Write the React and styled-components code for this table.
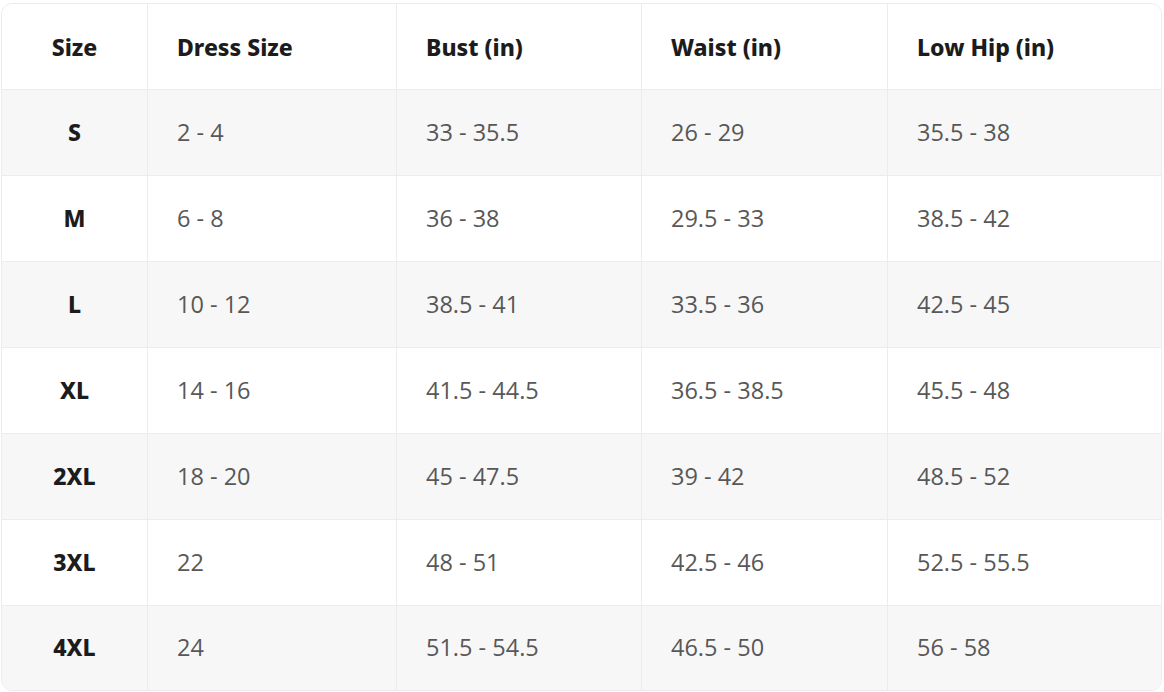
import React from "react";
import styled, { createGlobalStyle } from "styled-components";

const GlobalStyle = createGlobalStyle`
*{
    box-sizing: border-box;
}
body{
    margin: 0;
    background: #ffffff;
    font-family: "Open Sans", "Liberation Sans", sans-serif;
}
`

const rows = [
    ["S", "2 - 4", "33 - 35.5", "26 - 29", "35.5 - 38"],
    ["M", "6 - 8", "36 - 38", "29.5 - 33", "38.5 - 42"],
    ["L", "10 - 12", "38.5 - 41", "33.5 - 36", "42.5 - 45"],
    ["XL", "14 - 16", "41.5 - 44.5", "36.5 - 38.5", "45.5 - 48"],
    ["2XL", "18 - 20", "45 - 47.5", "39 - 42", "48.5 - 52"],
    ["3XL", "22", "48 - 51", "42.5 - 46", "52.5 - 55.5"],
    ["4XL", "24", "51.5 - 54.5", "46.5 - 50", "56 - 58"],
];

const headers = ["Size", "Dress Size", "Bust (in)", "Waist (in)", "Low Hip (in)"];

const App = () => {
    return (
        <>
            <GlobalStyle />
            <Page>
                <Card>
                    <Row>
                        {headers.map((h, i) => (
                            <HeadCell key={h} $center={i === 0}>{h}</HeadCell>
                        ))}
                    </Row>
                    {rows.map((row, r) => (
                        <Row key={row[0]} $striped={r % 2 === 0}>
                            {row.map((cell, i) =>
                                i === 0 ? (
                                    <SizeCell key={i}>{cell}</SizeCell>
                                ) : (
                                    <Cell key={i}>{cell}</Cell>
                                )
                            )}
                        </Row>
                    ))}
                </Card>
            </Page>
        </>
    );
};

const Page = styled.div`
padding: 3px 2px 1px 1px;
`

const Card = styled.div`
border: 1px solid #ececec;
border-radius: 11px;
overflow: hidden;
background: #ffffff;
`

const Row = styled.div`
display: grid;
grid-template-columns: 146px 249px 245px 246px 1fr;
height: 86px;
background: ${(p) => (p.$striped ? "#f7f7f7" : "#ffffff")};
border-bottom: 1px solid #ececec;
&:last-child{
    height: 84px;
    border-bottom: none;
}
& > div{
    border-right: 1px solid #ececec;
}
& > div:last-child{
    border-right: none;
}
`

const BaseCell = styled.div`
display: flex;
align-items: center;
padding-bottom: 2px;
`

const HeadCell = styled(BaseCell)`
justify-content: ${(p) => (p.$center ? "center" : "flex-start")};
padding-left: ${(p) => (p.$center ? "0" : "29px")};
padding-bottom: 0;
font-family: "Noto Sans", "Liberation Sans", sans-serif;
font-weight: 800;
font-size: 23px;
color: #1c1c1c;
`

const Cell = styled(BaseCell)`
padding-left: 29px;
font-size: 23.5px;
color: #585858;
`

const SizeCell = styled(BaseCell)`
justify-content: center;
font-family: "Noto Sans", "Liberation Sans", sans-serif;
font-weight: 800;
font-size: 23px;
color: #1c1c1c;
`

export default App;
